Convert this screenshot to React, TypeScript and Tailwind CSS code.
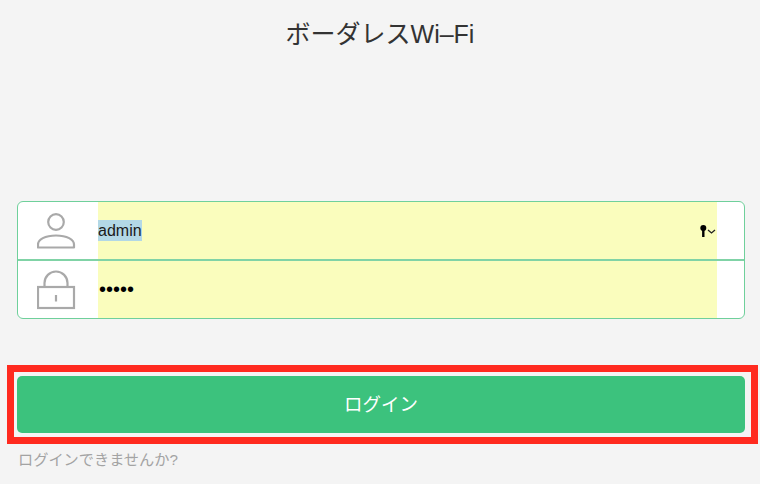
const jp = "font-['Liberation_Sans','Noto_Sans_CJK_JP',sans-serif]"

function UserIcon() {
  return (
    <svg width="40" height="36" viewBox="0 0 40 36" fill="none" stroke="#a9a9a9" strokeWidth="2.200">
      <circle cx="19" cy="9" r="7.800" />
      <path d="M1 34.500v-3c0-5 7-9 18-9s18 4 18 9v3z" strokeLinejoin="round" />
    </svg>
  )
}

function LockIcon() {
  return (
    <svg width="40" height="40" viewBox="0 0 40 40" fill="none" stroke="#a9a9a9" strokeWidth="2.200">
      <path d="M7.500 17v-4a11.500 11.500 0 0 1 23 0v4" />
      <rect x="1" y="17" width="36" height="21" />
      <path d="M19 25v6.500" />
    </svg>
  )
}

function KeyIcon() {
  return (
    <svg width="16" height="12" viewBox="0 0 16 12" fill="none">
      <circle cx="3.300" cy="3" r="3" fill="#000" />
      <path d="M3.300 4v8" stroke="#000" strokeWidth="2.400" />
      <path d="M8 5l3.500 3 3.500-3" stroke="#222" strokeWidth="1.300" />
    </svg>
  )
}

export default function App() {
  return (
    <div className={`${jp} w-[760px] h-[484px] overflow-hidden bg-[#f4f4f4] flex flex-col`}>
      <h1 className="h-[201px] pt-[16px] text-center text-[25px] leading-[36px] font-normal text-[#333]">
        ボーダレスWi–Fi
      </h1>

      <div className="ml-[17px] w-[728px] h-[118px] flex flex-col rounded-[6px] border border-[#6fd09b] bg-white overflow-hidden">
        <div className="h-[59px] flex border-b-2 border-[#80d3a6]">
          <div className="w-[80px] flex items-center justify-center pr-[3px]">
            <UserIcon />
          </div>
          <div className="w-[619px] bg-[#fafdbd] flex items-center justify-between pr-[1px]">
            <span className="text-[16px] leading-[21px] bg-[#b3d8e6] text-[#1a1a1a]">admin</span>
            <KeyIcon />
          </div>
        </div>
        <div className="flex-1 flex">
          <div className="w-[80px] flex items-center justify-center pr-[3px]">
            <LockIcon />
          </div>
          <div className="w-[619px] bg-[#fafdbd] flex items-center pl-[1px]">
            <span className="text-[20px] leading-[21px] text-black">•••••</span>
          </div>
        </div>
      </div>

      <div className="ml-[7px] mt-[46px] w-[751px] h-[79px] border-[7px] border-[#ff2a1f] pl-[3px] pr-[6px] py-[4px]">
        <button className="w-full h-full rounded-[5px] bg-[#3cc27d] text-white text-[18.500px]">ログイン</button>
      </div>

      <a className="ml-[18px] mt-[6px] text-[15.200px] leading-[20px] text-[#a3a3a3]">ログインできませんか?</a>
    </div>
  )
}
